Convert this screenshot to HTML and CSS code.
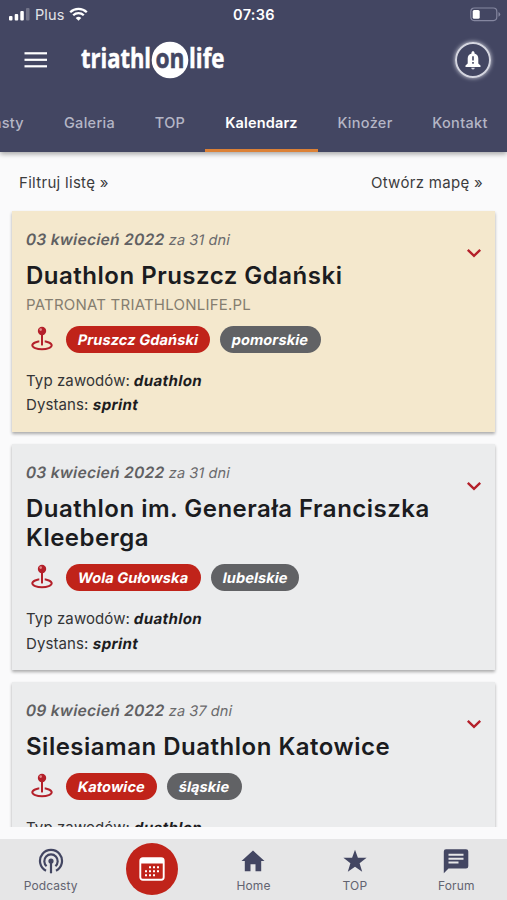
FILE: index.html
```html
<!DOCTYPE html>
<html lang="pl">
<head>
<meta charset="utf-8">
<title>triathlonlife – Kalendarz</title>
<link rel="stylesheet" href="styles.css">
</head>
<body>
<svg class="defs" aria-hidden="true">
  <symbol id="pin" viewBox="0 0 24 26">
    <ellipse cx="12" cy="19.300" rx="9.700" ry="4" fill="none" stroke="#b4202a" stroke-width="2"/>
    <path d="M9.300 13h5.400v6a2.700 1 0 0 1-5.400 0z" fill="var(--card)"/>
    <path d="M11 7h2v12.200q-1 .8-2 0z" fill="#b4202a"/>
    <circle cx="12" cy="5" r="4.200" fill="#b4202a"/>
    <circle cx="10.700" cy="3.600" r="1.300" fill="#e28a8a"/>
  </symbol>
  <symbol id="chevron" viewBox="0 0 16 10">
    <path d="M1.800 1.800 8 7.800l6.200-6" fill="none" stroke="#b4202a" stroke-width="2.400"/>
  </symbol>
</svg>
<div class="app">
  <header class="header">
    <div class="status">
      <div class="carrier">
        <svg width="21" height="14" viewBox="0 0 21 14" fill="#fff">
          <rect x="0" y="9" width="3.500" height="4.500" rx="1"/>
          <rect x="5.700" y="7" width="3.500" height="6.500" rx="1"/>
          <rect x="11.300" y="4" width="3.500" height="9.500" rx="1"/>
          <rect x="17" y="1" width="3.500" height="12.500" rx="1" opacity=".25"/>
        </svg>
        <span class="carrier-name">Plus</span>
        <svg width="19" height="14" viewBox="0 0 19 14" fill="none" stroke="#fff" stroke-width="2.300">
          <path d="M1.200 5.200a11.800 11.800 0 0 1 16.600 0"/>
          <path d="M4.200 8.200a7.600 7.600 0 0 1 10.600 0"/>
          <path d="M9.500 13.800 6.700 11a4 4 0 0 1 5.600 0z" fill="#fff" stroke="none"/>
        </svg>
      </div>
      <div class="clock">07:36</div>
      <svg class="battery" width="31" height="15" viewBox="0 0 31 15">
        <rect x=".8" y="1" width="26" height="12.600" rx="3.500" fill="none" stroke="#8587a0" stroke-width="1.200"/>
        <rect x="2.700" y="3" width="7" height="8.700" rx="1.500" fill="#fff"/>
        <path d="M28.500 5v4.700q1.700-.7 1.700-2.350T28.500 5z" fill="#8587a0"/>
      </svg>
    </div>
    <div class="bar">
      <svg class="menu" width="24" height="16" viewBox="0 0 24 16" fill="#fff">
        <rect x=".5" y=".2" width="22.500" height="2.200"/>
        <rect x=".5" y="6.700" width="22.500" height="2.200"/>
        <rect x=".5" y="13.200" width="22.500" height="2.200"/>
      </svg>
      <svg class="logo" width="146" height="38" viewBox="0 0 146 38">
        <circle cx="90" cy="19" r="18.300" fill="#fff"/>
        <text x="1" y="26.500" textLength="70" lengthAdjust="spacingAndGlyphs" fill="#fff" stroke="#fff">triathl</text>
        <text x="75.500" y="26.500" textLength="29" lengthAdjust="spacingAndGlyphs" fill="#434662" stroke="#434662">on</text>
        <text x="109" y="26.500" textLength="35.500" lengthAdjust="spacingAndGlyphs" fill="#fff" stroke="#fff">life</text>
      </svg>
      <div class="bell">
        <svg width="16" height="19" viewBox="0 0 16 19">
          <path d="M8 .3c.9 0 1.500.6 1.500 1.500v.6c2.400.7 3.800 2.600 3.800 5v5l2.200 2V16H.5v-1.600l2.200-2v-5c0-2.400 1.400-4.300 3.800-5v-.6C6.500.9 7.100.3 8 .3z" fill="#fff"/>
          <path d="M6.200 16.700h3.600a1.800 1.800 0 0 1-3.600 0z" fill="#d8d9e2"/>
          <path d="M7.200 5.300h1.600v4.200H7.200zM7.200 11h1.600v1.700H7.200z" fill="#434662"/>
        </svg>
      </div>
    </div>
    <nav class="tabs">
      <span class="tab tab-cut">Podcasty</span>
      <span class="tab">Galeria</span>
      <span class="tab">TOP</span>
      <span class="tab tab-active">Kalendarz</span>
      <span class="tab">Kinożer</span>
      <span class="tab">Kontakt</span>
    </nav>
  </header>

  <main class="content">
    <div class="tools"><span class="filter">Filtruj listę »</span><span>Otwórz mapę »</span></div>

    <article class="card card-featured">
      <div class="card-main">
        <div class="date"><b class="slant">03 kwiecień 2022</b> <span class="slant">za 31 dni</span></div>
        <h2 class="title">Duathlon Pruszcz Gdański</h2>
        <div class="patron">PATRONAT TRIATHLONLIFE.PL</div>
        <div class="place">
          <svg class="pin"><use href="#pin"/></svg>
          <span class="pill pill-city"><span class="slant">Pruszcz Gdański</span></span>
          <span class="pill"><span class="slant">pomorskie</span></span>
        </div>
        <div class="info">Typ zawodów: <b class="slant">duathlon</b></div>
        <div class="info">Dystans: <b class="slant">sprint</b></div>
      </div>
      <svg class="chevron"><use href="#chevron"/></svg>
    </article>

    <article class="card">
      <div class="card-main">
        <div class="date"><b class="slant">03 kwiecień 2022</b> <span class="slant">za 31 dni</span></div>
        <h2 class="title">Duathlon im. Generała Franciszka Kleeberga</h2>
        <div class="place">
          <svg class="pin"><use href="#pin"/></svg>
          <span class="pill pill-city"><span class="slant">Wola Gułowska</span></span>
          <span class="pill"><span class="slant">lubelskie</span></span>
        </div>
        <div class="info">Typ zawodów: <b class="slant">duathlon</b></div>
        <div class="info">Dystans: <b class="slant">sprint</b></div>
      </div>
      <svg class="chevron"><use href="#chevron"/></svg>
    </article>

    <article class="card">
      <div class="card-main">
        <div class="date"><b class="slant">09 kwiecień 2022</b> <span class="slant">za 37 dni</span></div>
        <h2 class="title">Silesiaman Duathlon Katowice</h2>
        <div class="place">
          <svg class="pin"><use href="#pin"/></svg>
          <span class="pill pill-city"><span class="slant">Katowice</span></span>
          <span class="pill"><span class="slant">śląskie</span></span>
        </div>
        <div class="info">Typ zawodów: <b class="slant">duathlon</b></div>
        <div class="info">Dystans: <b class="slant">sprint</b></div>
      </div>
      <svg class="chevron"><use href="#chevron"/></svg>
    </article>
  </main>

  <nav class="bottom">
    <div class="item">
      <svg width="26" height="26" viewBox="0 0 26 26" fill="none" stroke="#434662" stroke-width="2.200">
        <path d="M8 22.700a11 11 0 1 1 10 0"/>
        <path d="M8.600 18.200a6.700 6.700 0 1 1 8.800 0"/>
        <circle cx="13" cy="13" r="2.600" fill="#434662" stroke="none"/>
        <path d="M13 13v12.300"/>
      </svg>
      <span>Podcasty</span>
    </div>
    <div class="item">
      <div class="round">
        <svg width="26" height="24" viewBox="0 0 26 24">
          <rect x="1.300" y="1.300" width="23.400" height="21.400" rx="2.500" fill="none" stroke="#fff" stroke-width="1.900"/>
          <path d="M1 6.500V3.500Q1 1 3.500 1h19Q25 1 25 3.500v3z" fill="#fff"/>
          <path d="M10 9.200h2v2h-2zM14 9.200h2v2h-2zM18 9.200h2v2h-2zM6 13.200h2v2H6zM10 13.200h2v2h-2zM14 13.200h2v2h-2zM18 13.200h2v2h-2zM6 17.200h2v2H6zM10 17.200h2v2h-2zM14 17.200h2v2h-2z" fill="#fff"/>
        </svg>
      </div>
    </div>
    <div class="item">
      <svg width="26" height="26" viewBox="0 0 26 26"><path d="M13 2.500 24.500 13h-3.300v10.300h-5.700v-7h-5v7H4.800V13H1.500z" fill="#434662"/></svg>
      <span>Home</span>
    </div>
    <div class="item">
      <svg width="26" height="26" viewBox="0 0 26 26"><path d="m13 1.800 2.900 8h8.700l-7 5.400 2.600 8.600-7.200-5-7.200 5 2.600-8.600-7-5.400h8.700z" fill="#434662"/></svg>
      <span>TOP</span>
    </div>
    <div class="item">
      <svg width="26" height="26" viewBox="0 0 26 26">
        <path d="M3 1.200h20a2.300 2.300 0 0 1 2.300 2.300v14.800a2.300 2.300 0 0 1-2.300 2.300H5.500L.8 25.200V3.500A2.300 2.300 0 0 1 3 1.200z" fill="#434662"/>
        <path d="M5.500 6.700h15M5.500 10.700h15M5.500 14.500h10" stroke="#e6e6e7" stroke-width="2"/>
      </svg>
      <span>Forum</span>
    </div>
  </nav>
</div>
</body>
</html>
```
FILE: styles.css
```css
* { box-sizing: border-box; }
body { margin: 0; background: #fafafb; font-family: Inter, "Liberation Sans", sans-serif; }
.defs { display: none; }
.app { width: 507px; height: 900px; display: flex; flex-direction: column; overflow: hidden; }
.slant { display: inline-block; transform: skewX(-11deg); }

.header { flex: none; height: 152px; background: #434662; color: #fff; display: flex; flex-direction: column; z-index: 1; box-shadow: 0 2px 5px rgba(0, 0, 0, .35); overflow-x: clip; }
.status { height: 28px; display: grid; grid-template-columns: 1fr auto 1fr; align-items: center; padding: 0 6px 0 9px; }
.carrier { display: flex; align-items: center; gap: 5px; }
.carrier-name { font-size: 14.5px; letter-spacing: .1px; opacity: .85; width: 29px; }
.clock { font-size: 14.5px; font-weight: 600; letter-spacing: .3px; margin-right: 2px; }
.battery { justify-self: end; }
.bar { height: 64px; display: flex; align-items: center; padding: 0 16px 0 24px; }
.logo { margin-left: 32px; font-family: "Open Sans", sans-serif; font-size: 26.500px; font-weight: 700; stroke-width: .5px; }
.bell { margin-left: auto; width: 36px; height: 36px; border: 2px solid #d5d6e0; border-radius: 50%; box-shadow: 0 0 4px #d5d6e0; display: flex; align-items: center; justify-content: center; }
.tabs { height: 60px; margin-left: -64px; width: 572px; display: grid; grid-template-columns: 108px 91px 70px 113px 94px 96px; }
.tab { display: flex; align-items: center; justify-content: center; padding-top: 3px; font-size: 14.500px; font-weight: 500; letter-spacing: .3px; color: #b5b6c6; border-bottom: 3px solid transparent; }
.tab-cut { justify-content: flex-end; padding-right: 20px; }
.tab-active { color: #fff; font-weight: 600; letter-spacing: .15px; border-color: #dc8136; }

.content { flex: none; height: 675px; padding: 0 12px; overflow: hidden; }
.tools { height: 59px; display: flex; justify-content: space-between; align-items: center; padding: 1px 12px 0 7px; font-size: 15px; letter-spacing: .3px; color: #3c3c3e; }
.card { --card: #ebeced; background: var(--card); color: #1b1c1f; height: 226px; margin-bottom: 12px; padding: 17.800px 14px 0; display: flex; justify-content: space-between; box-shadow: 0 2px 3px rgba(0, 0, 0, .32); }
.card-featured { --card: #f4e8cd; height: 221px; }
.card-main { width: 420px; }
.date { font-size: 14.500px; line-height: 22px; letter-spacing: .1px; color: #6a6a6c; }
.date b { font-size: 15.500px; font-weight: 600; color: #606062; letter-spacing: .3px; }
.title { margin: 10px 0 0; font-size: 24px; line-height: 29.300px; font-weight: 620; letter-spacing: .5px; }
.patron { font-size: 15px; line-height: 20px; margin-top: 4.500px; margin-bottom: -.5px; letter-spacing: .22px; color: #857e70; }
.place { display: flex; align-items: center; height: 27px; margin: 11.500px 0 16.300px; }
.pin { width: 24px; height: 26px; margin: 0 12px 0 4px; }
.pill { height: 27px; border-radius: 14px; padding: 0 12px; margin-right: 10px; display: flex; align-items: center; background: #616265; color: #fff; font-size: 14.500px; font-weight: 700; letter-spacing: .13px; }
.pill-city { background: #c0231a; }
.info { font-size: 15px; line-height: 24.500px; letter-spacing: .1px; color: #333436; }
.info b { font-weight: 700; color: #1c1c1e; letter-spacing: .4px; }
.chevron { width: 16px; height: 10px; margin-top: 19px; margin-right: -1px; }

.bottom { flex: none; margin-top: 12px; height: 61px; background: #e6e6e7; display: grid; grid-template-columns: repeat(5, 1fr); }
.item { display: flex; flex-direction: column; align-items: center; padding-top: 9px; font-size: 12px; letter-spacing: .12px; color: #626370; }
.item span { line-height: 16px; margin-top: 4px; }
.round { width: 52px; height: 52px; margin-top: -5px; border-radius: 50%; background: #c0231a; display: flex; align-items: center; justify-content: center; }
```
